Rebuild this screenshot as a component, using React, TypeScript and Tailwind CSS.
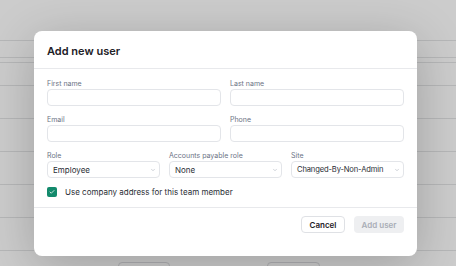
import { ChevronDown, Check } from "lucide-react";

const font = { fontFamily: "Inter, 'Noto Sans', sans-serif" };

function Field({ label }: { label: string }) {
  return (
    <div className="flex flex-col">
      <label className="text-[7px] leading-[10px] text-[#6b7385]">{label}</label>
      <input className="h-[17px] w-full rounded-[4px] border border-[#e3e5e9] bg-white px-[5px] text-[8px] outline-none" />
    </div>
  );
}

function SelectField({ label, value, tight }: { label: string; value: string; tight?: boolean }) {
  return (
    <div className="flex flex-col">
      <span className="text-[7px] leading-[10px] text-[#6b7385]">{label}</span>
      <div className="flex h-[17px] items-center justify-between gap-[3px] rounded-[4px] border border-[#e3e5e9] bg-white pl-[5px] pr-[3px]">
        <span
          className={`whitespace-nowrap text-[#2a2e35] ${tight ? "text-[7.6px] tracking-[-0.15px]" : "text-[8px]"}`}
        >
          {value}
        </span>
        <ChevronDown className="h-[6px] w-[6px] shrink-0 text-[#a3a8b3]" strokeWidth={2} />
      </div>
    </div>
  );
}

function BgRow({ first }: { first?: boolean }) {
  return (
    <div className={`flex border-b border-[#e4e5e7] ${first ? "h-[23px]" : "h-[33px]"}`}>
      <div className="flex w-full items-start pt-[11px]">
        <div className="ml-[118px] flex h-[14px] w-[52px] items-center justify-center rounded-[4px] border border-[#dcdde0] text-[6px] text-[#444]">
          Add to Hold
        </div>
        <div className="ml-[97px] flex h-[14px] w-[53px] items-center justify-center rounded-[4px] border border-[#dcdde0] text-[6px] text-[#444]">
          Add to Hold
        </div>
      </div>
    </div>
  );
}

export default function App() {
  return (
    <div className="relative h-[266px] w-[456px] overflow-hidden bg-white" style={font}>
      {/* page behind the dialog */}
      <div className="flex flex-col">
        <div className="h-[41px] border-b border-[#e4e5e7]" />
        <div className="h-[17px] border-b border-[#e4e5e7]" />
        <div className="h-[5px] border-b border-[#e4e5e7]" />
        <BgRow first />
        <BgRow />
        <BgRow />
        <BgRow />
        <BgRow />
        <BgRow />
        <BgRow />
      </div>

      {/* overlay */}
      <div className="absolute inset-0 bg-black/20 pl-[34px] pt-[31px]">
        <div className="w-[383px] overflow-hidden rounded-[8px] bg-white shadow-[0_10px_50px_rgba(0,0,0,0.22)]">
          <div className="flex h-[38px] items-center border-b border-[#e8e9ec] px-[13px] pt-[3px]">
            <h2 className="text-[11px] font-semibold text-[#1d2026]">Add new user</h2>
          </div>

          <div className="border-b border-[#e8e9ec] px-[13px] pb-[10px] pt-[10px]">
            <div className="grid grid-cols-2 gap-x-[9px] gap-y-[9px]">
              <Field label="First name" />
              <Field label="Last name" />
              <Field label="Email" />
              <Field label="Phone" />
            </div>
            <div className="mt-[9px] grid grid-cols-3 gap-x-[9px]">
              <SelectField label="Role" value="Employee" />
              <SelectField label="Accounts payable role" value="None" />
              <SelectField label="Site" value="Changed-By-Non-Admin" tight />
            </div>
            <div className="mt-[9px] flex h-[10px] items-center gap-[8px]">
              <span className="flex h-[10px] w-[10px] items-center justify-center rounded-[2px] bg-[#138a6c]">
                <Check className="h-[6px] w-[6px] text-white" strokeWidth={3} />
              </span>
              <span className="text-[8px] text-[#2a2e35]">Use company address for this team member</span>
            </div>
          </div>

          <div className="flex justify-end gap-[9px] px-[13px] pb-[23px] pt-[8px]">
            <button className="h-[17px] w-[44px] rounded-[4px] border border-[#dfe1e5] bg-white text-[8px] font-semibold text-[#1d2026]">
              Cancel
            </button>
            <button className="h-[17px] w-[50px] rounded-[4px] bg-[#eeeff1] text-[8px] font-semibold text-[#a9adb6]">
              Add user
            </button>
          </div>
        </div>
      </div>
    </div>
  );
}
